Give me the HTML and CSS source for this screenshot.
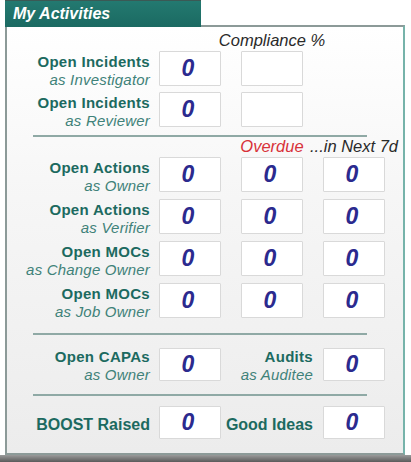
FILE: index.html
```html
<!DOCTYPE html>
<html>
<head>
<meta charset="utf-8">
<link rel="stylesheet" href="styles.css">
</head>
<body>
<div class="widget">
  <div class="tab">My Activities</div>
  <div class="panel">
    <div class="grid head">
      <div></div><div></div>
      <div class="colhead"><span class="dark">Compliance %</span></div>
      <div></div>
    </div>
    <div class="grid rows r1">
      <div class="label"><b>Open Incidents</b><i>as Investigator</i></div>
      <div class="box">0</div>
      <div class="box"></div>
      <div></div>
      <div class="label"><b>Open Incidents</b><i>as Reviewer</i></div>
      <div class="box">0</div>
      <div class="box"></div>
      <div></div>
    </div>
    <div class="sep s1"></div>
    <div class="grid head">
      <div></div><div></div>
      <div class="colhead"><span class="red">Overdue</span></div>
      <div class="colhead"><span class="dark">...in Next 7d</span></div>
    </div>
    <div class="grid rows r2">
      <div class="label"><b>Open Actions</b><i>as Owner</i></div>
      <div class="box">0</div><div class="box">0</div><div class="box">0</div>
      <div class="label"><b>Open Actions</b><i>as Verifier</i></div>
      <div class="box">0</div><div class="box">0</div><div class="box">0</div>
      <div class="label"><b>Open MOCs</b><i>as Change Owner</i></div>
      <div class="box">0</div><div class="box">0</div><div class="box">0</div>
      <div class="label"><b>Open MOCs</b><i>as Job Owner</i></div>
      <div class="box">0</div><div class="box">0</div><div class="box">0</div>
    </div>
    <div class="sep s2"></div>
    <div class="grid rows r3">
      <div class="label"><b>Open CAPAs</b><i>as Owner</i></div>
      <div class="box">0</div>
      <div class="label mid"><b>Audits</b><i>as Auditee</i></div>
      <div class="box">0</div>
    </div>
    <div class="sep s3"></div>
    <div class="grid rows r4">
      <div class="label single"><b>BOOST Raised</b></div>
      <div class="box">0</div>
      <div class="label mid single"><b>Good Ideas</b></div>
      <div class="box">0</div>
    </div>
  </div>
</div>
<div class="shadow"></div>
</body>
</html>
```
FILE: styles.css
```css
html, body {
  margin: 0;
  padding: 0;
  background: #ffffff;
  font-family: "Liberation Sans", Arial, sans-serif;
}
.widget {
  margin-left: 5px;
  width: 400px;
}
.tab {
  position: relative;
  z-index: 1;
  width: 196px;
  height: 27px;
  margin-bottom: -2px;
  padding-left: 8px;
  box-sizing: border-box;
  background: linear-gradient(#237970, #1b6a62);
  border-top: 1px solid #3b5955;
  color: #ffffff;
  font-weight: bold;
  font-style: italic;
  font-size: 16px;
  line-height: 25px;
}
.panel {
  height: 430px;
  box-sizing: border-box;
  border: 2px solid #8c9a98;
  border-right-color: #76b3aa;
  background: linear-gradient(#ffffff, #f6f6f6 40%, #ececec);
  padding-top: 4px;
}
.grid {
  display: grid;
  grid-template-columns: 152px 82px 82px 62px;
}
.head {
  height: 18px;
  line-height: 18px;
  font-size: 16.5px;
  font-style: italic;
}
.colhead {
  width: 62px;
  display: flex;
  justify-content: center;
  white-space: nowrap;
}
.dark { color: #2a2a2a; }
.red { color: #d8323a; }
.rows {
  margin-top: 2px;
  grid-auto-rows: 35px;
  row-gap: 6px;
}
.r2 { row-gap: 7px; }
.r3 { margin-top: 13px; grid-auto-rows: 33px; }
.r4 { margin-top: 10px; grid-auto-rows: 33px; }
.label {
  align-self: end;
  margin-bottom: -2px;
  padding-right: 9px;
  display: flex;
  flex-direction: column;
  align-items: flex-end;
  white-space: nowrap;
  font-size: 15px;
  line-height: 17.5px;
}
.label b {
  color: #1c6a60;
  font-weight: bold;
  letter-spacing: 0.3px;
}
.label i {
  color: #3f8279;
  font-style: italic;
  letter-spacing: 0.2px;
}
.label.mid {
  margin-left: -20px;
  padding-right: 10px;
}
.label.single {
  align-self: center;
  margin-bottom: 0;
  margin-top: 4px;
  font-size: 16px;
}
.label.single b {
  letter-spacing: 0;
}
.box {
  width: 62px;
  box-sizing: border-box;
  background: #ffffff;
  border: 1px solid #d9d9d9;
  border-radius: 1px;
  display: flex;
  align-items: center;
  justify-content: center;
  color: #2b2a8e;
  font-weight: bold;
  font-style: italic;
  font-size: 23px;
  padding-right: 4px;
}
.sep {
  height: 2px;
  margin-left: 26px;
  width: 334px;
  background: #8fa9a5;
}
.s1 { margin-top: 8px; }
.s2 { margin-top: 15px; }
.s3 { margin-top: 13px; }
.shadow {
  height: 7px;
  background: linear-gradient(#9a9a9a, #5a5a5a);
}
```
